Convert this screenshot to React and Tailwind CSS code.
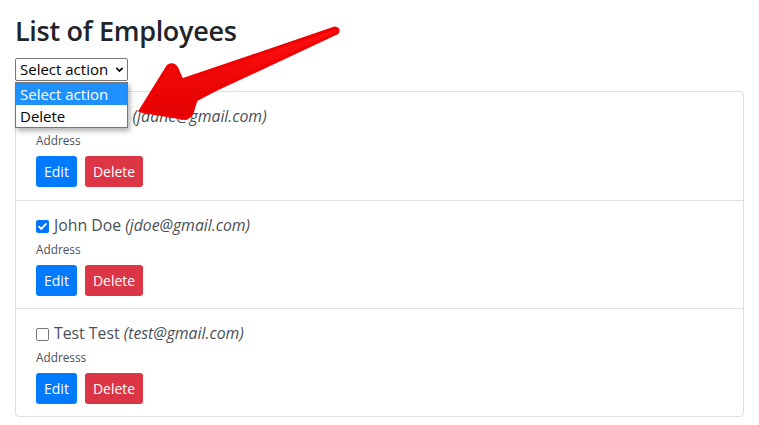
import { useState } from 'react';

const employees = [
  { id: 1, name: 'Jane Dane', email: 'jdane@gmail.com', address: 'Address', checked: false },
  { id: 2, name: 'John Doe', email: 'jdoe@gmail.com', address: 'Address', checked: true },
  { id: 3, name: 'Test Test', email: 'test@gmail.com', address: 'Addresss', checked: false },
];

function Checkbox({ checked }) {
  if (checked) {
    return (
      <span className="flex h-[13px] w-[13px] items-center justify-center rounded-[2px] bg-[#0075ff]">
        <svg viewBox="0 0 12 12" className="h-[11px] w-[11px]">
          <path d="M2.2 6.2 4.8 8.7 9.8 3.2" fill="none" stroke="#fff" strokeWidth="2" strokeLinecap="round" strokeLinejoin="round" />
        </svg>
      </span>
    );
  }
  return <span className="block h-[13px] w-[13px] rounded-[2px] border border-[#767676] bg-white" />;
}

function Arrow() {
  return (
    <svg className="pointer-events-none absolute left-0 top-0" width="759" height="425" viewBox="0 0 759 425">
      <defs>
        <linearGradient id="red" x1="0" y1="0" x2="0" y2="1">
          <stop offset="0" stopColor="#ff1010" />
          <stop offset="1" stopColor="#e20000" />
        </linearGradient>
      </defs>
      <path
        d="M140 111 L168 66 Q175 62 178 71 L182 80 L335 28 Q340 29 337 33 L215 90 L196 100 L192 113 Q189 119 182 118 Z"
        fill="url(#red)"
        stroke="#f00000"
        strokeWidth="3"
        strokeLinejoin="round"
      />
    </svg>
  );
}

export default function App() {
  const [items] = useState(employees);

  return (
    <div className="relative h-[425px] w-[759px] overflow-hidden bg-white font-['Open_Sans',sans-serif] text-[#212529]">
      <div className="px-[15px] pt-[13px]">
        <h2 className="text-[27px] font-semibold leading-[36px] tracking-[-0.3px] text-[#212529]">List of Employees</h2>
        <div className="relative mt-[9px] w-[113px]">
          <div className="flex h-[23px] items-center justify-between rounded-[2px] border border-[#767676] bg-white pl-[4px] pr-[3px] text-[15px] leading-none text-black">
            <span>Select action</span>
            <svg viewBox="0 0 10 10" className="h-[9px] w-[9px]">
              <path d="M1.5 3.2 5 6.7 8.5 3.2" fill="none" stroke="#000" strokeWidth="1.8" />
            </svg>
          </div>
          <div className="absolute left-0 top-[24px] z-10 w-[113px] border border-[#767676] bg-white text-[15px] leading-[22px] text-black shadow-[2px_3px_5px_rgba(0,0,0,0.3)]">
            <div className="bg-[#1e90ff] pl-[4px] text-white">Select action</div>
            <div className="pl-[4px]">Delete</div>
          </div>
        </div>
        <ul className="mt-[10px] rounded-[4px] border border-[#dfdfdf]">
          {items.map((e, i) => (
            <li key={e.id} className={'h-[108px] px-[20px] pt-[13px] ' + (i > 0 ? 'border-t border-[#dfdfdf]' : '')}>
              <div className="flex h-[24px] items-center gap-[5px] text-[15.8px] text-[#495057]">
                <Checkbox checked={e.checked} />
                <span>
                  {e.name} <em className="italic">({e.email})</em>
                </span>
              </div>
              <div className="mt-[3px] h-[24px] text-[11.8px] leading-[16px] text-[#495057]">{e.address}</div>
              <div className="flex gap-[8px]">
                <button className="h-[31px] rounded-[3px] bg-[#007bff] px-[8px] text-[14px] text-white">Edit</button>
                <button className="h-[31px] rounded-[3px] bg-[#dc3545] px-[8px] text-[14px] text-white">Delete</button>
              </div>
            </li>
          ))}
        </ul>
      </div>
      <Arrow />
    </div>
  );
}
